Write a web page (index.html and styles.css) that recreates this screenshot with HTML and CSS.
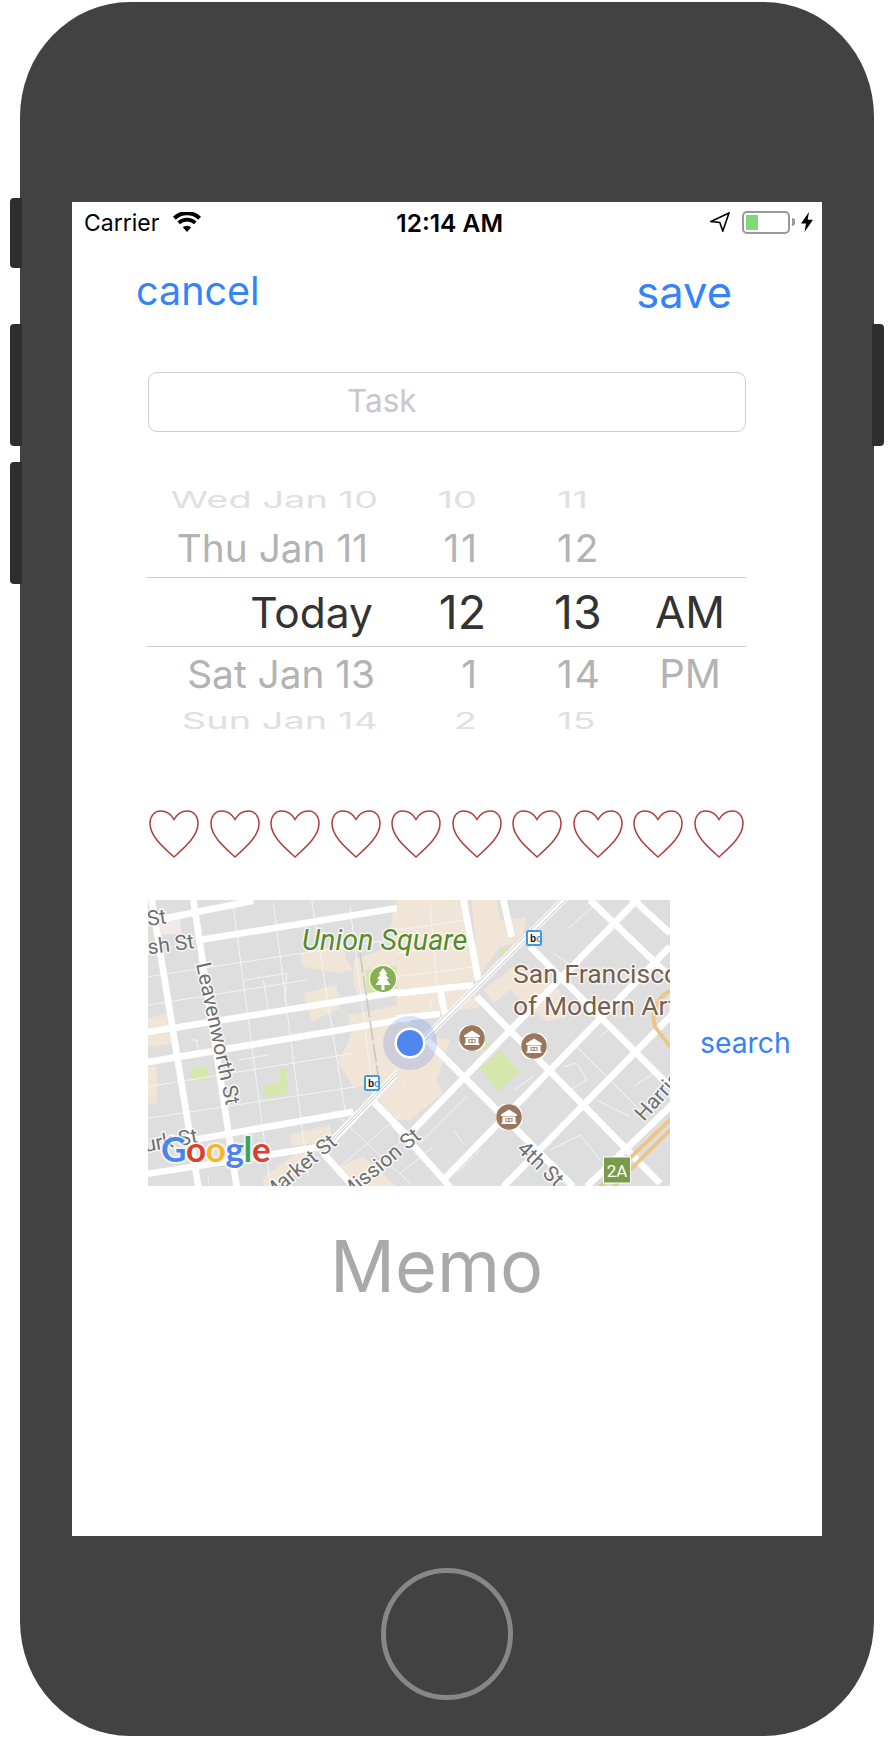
FILE: index.html
```html
<!DOCTYPE html>
<html lang="en">
<head>
<meta charset="utf-8">
<title>Memo</title>
<link rel="stylesheet" href="styles.css">
</head>
<body>
<svg class="defs" width="0" height="0" aria-hidden="true">
  <symbol id="heart" viewBox="0 0 50 48">
    <path d="M25 9.5C22 4 17 1 11.500 1 5 1 1 6.500 1 13.500 1 26 14 37 25 47 36 37 49 26 49 13.500 49 6.500 45 1 38.500 1 33 1 28 4 25 9.500Z"/>
  </symbol>
  <symbol id="museum" viewBox="0 0 26 26">
    <circle cx="13" cy="13" r="13.500" fill="#9a775c" stroke="#fff" stroke-width="1.500"/>
    <path d="M13 5.500 21 10.500V12H5V10.500Z" fill="#fff"/>
    <path d="M6.500 12.500H19.500V18.500H20.500V20H5.500V18.500H6.500Z" fill="#fff"/>
    <path d="M9.500 14H16.500V18H9.500Z" fill="#9a775c"/>
    <path d="M10.500 14.500H11.800V17.500H10.500ZM14.200 14.500H15.500V17.500H14.200ZM11.500 15.500H14.500V16.500H11.500Z" fill="#fff"/>
  </symbol>
</svg>

<div class="device">
  <span class="side-button btn-mute"></span>
  <span class="side-button btn-up"></span>
  <span class="side-button btn-down"></span>
  <span class="side-button btn-power"></span>

  <main class="screen">
    <header class="status">
      <div class="status-left">
        <span class="carrier">Carrier</span>
        <svg class="wifi" viewBox="0 0 28 20"><path d="M14 20 9.800 15.300A6.300 6.300 0 0 1 18.200 15.300Z"/><path d="M6.900 12.200 4.500 9.500A14 14 0 0 1 23.500 9.500L21.100 12.200A10.500 10.500 0 0 0 6.900 12.200Z"/><path d="M2.800 7.700 0 4.700A20.500 20.500 0 0 1 28 4.700L25.200 7.700A16.500 16.500 0 0 0 2.800 7.700Z"/></svg>
      </div>
      <span class="clock">12:14 AM</span>
      <div class="status-right">
        <svg class="arrow" viewBox="0 0 20 20"><path d="M19 1 1 9.500 9.800 10.400 12.800 19Z" fill="none" stroke="#000" stroke-width="1.600" stroke-linejoin="miter"/></svg>
        <span class="battery"><span class="battery-level"></span></span>
        <span class="battery-nub"></span>
        <svg class="bolt" viewBox="0 0 12 20"><path d="M8 0 0 11.500H5L3.500 20 12 7.800H6.700Z"/></svg>
      </div>
    </header>

    <nav class="actions">
      <span class="action">cancel</span>
      <span class="action action-save">save</span>
    </nav>

    <div class="task">Task</div>

    <section class="picker">
      <div class="wheel-row far far-top"><span class="date">Wed Jan 10</span><span class="hour">10</span><span class="minute">11</span><span class="ampm"></span></div>
      <div class="wheel-row near near-top"><span class="date">Thu Jan 11</span><span class="hour">11</span><span class="minute">12</span><span class="ampm"></span></div>
      <div class="wheel-row selected"><span class="date">Today</span><span class="hour">12</span><span class="minute">13</span><span class="ampm">AM</span></div>
      <div class="wheel-row near near-bottom"><span class="date">Sat Jan 13</span><span class="hour">1</span><span class="minute">14</span><span class="ampm">PM</span></div>
      <div class="wheel-row far far-bottom"><span class="date">Sun Jan 14</span><span class="hour">2</span><span class="minute">15</span><span class="ampm"></span></div>
    </section>

    <div class="hearts">
      <svg class="heart"><use href="#heart"/></svg><svg class="heart"><use href="#heart"/></svg><svg class="heart"><use href="#heart"/></svg><svg class="heart"><use href="#heart"/></svg><svg class="heart"><use href="#heart"/></svg><svg class="heart"><use href="#heart"/></svg><svg class="heart"><use href="#heart"/></svg><svg class="heart"><use href="#heart"/></svg><svg class="heart"><use href="#heart"/></svg><svg class="heart"><use href="#heart"/></svg>
    </div>

    <div class="location">
      <svg class="map" viewBox="0 0 522 286">
        <rect width="522" height="286" fill="#dedede"/>

        <g transform="translate(-8 -10) scale(.33333)">
          <g class="tan">
            <polygon points="760,60 810,50 810,130 790,140 750,130"/>
            <polygon points="480,190 610,165 620,210 640,240 600,250 490,230"/>
            <polygon points="640,210 810,150 810,300 660,330 640,280"/>
            <polygon points="490,310 590,285 600,355 515,395"/>
            <polygon points="625,375 810,340 810,385 630,410"/>
            <polygon points="635,420 810,395 810,510 725,590 640,590 590,510 620,470"/>
            <polygon points="700,620 760,570 810,620 810,690 770,690"/>
            <polygon points="24,385 78,372 85,408 24,420"/>
            <polygon points="24,438 95,428 100,460 24,472"/>
            <polygon points="24,530 50,528 50,640 24,640"/>
            <polygon points="450,735 570,705 575,740 520,760 455,768"/>
            <polygon points="370,862 470,790 525,790 430,890 370,890"/>
            <polygon points="600,830 670,800 770,890 620,890"/>
            <polygon points="60,90 120,85 125,130 60,135" class="pink"/>
          </g>
          <g class="park">
            <polygon points="152,535 200,528 205,568 158,574"/>
            <polygon points="370,590 418,578 415,536 438,534 442,600 436,615 375,622"/>
            <polygon points="676,240 780,225 788,300 682,312"/>
          </g>
          <g class="lanes">
            <polyline points="24,260 810,140"/><polyline points="24,345 500,270"/><polyline points="24,590 640,490"/><polyline points="24,685 650,590"/>
            <polyline points="280,50 390,880"/><polyline points="400,40 505,860"/><polyline points="515,30 615,660"/><polyline points="630,50 700,620"/>
            <polyline points="315,270 440,250 435,335"/><polyline points="370,270 385,360"/><polyline points="150,450 170,450 175,480"/><polyline points="295,510 385,495"/>
            <polyline points="600,830 810,650"/><polyline points="640,880 810,730"/><polyline points="575,660 810,880"/>
            <polyline points="205,860 205,880"/>
          </g>
          <g class="road">
            <polyline points="0,100 340,32"/><polyline points="180,150 810,48"/>
            <polyline points="0,430 810,300"/><polyline points="0,520 810,385"/>
            <polyline points="160,750 640,665"/><polyline points="0,855 545,770"/>
            <polyline points="35,30 175,890"/><polyline points="160,30 290,890"/>
            <polyline points="690,625 810,745"/><polyline points="550,790 640,890"/>
          </g>
          <polyline class="rail-bed" points="810,510 540,790"/>
          <polyline class="rail" points="810,514 540,794"/><polyline class="rail" points="806,508 536,788"/>
          <polyline class="rail-thin" points="660,190 715,560"/>
        </g>

        <g transform="translate(252 -10) scale(.33333)">
          <g class="tan">
            <polygon points="-10,30 205,30 235,270 -10,305"/>
            <polygon points="215,30 290,30 300,90 380,80 370,130 340,160 300,170 235,260"/>
            <polygon points="-10,310 120,300 130,370 -10,385"/>
            <polygon points="135,300 220,285 240,350 130,370"/>
            <polygon points="250,300 340,230 480,300 500,380 440,395 330,300 280,340"/>
            <polygon points="-10,390 100,440 150,450 110,570 130,610 30,690 -10,660"/>
          </g>
          <g class="park">
            <polygon points="240,535 300,480 360,545 295,605"/>
            <polygon points="300,175 325,175 320,205 305,205"/>
            <polygon points="240,480 275,450 260,480"/>
          </g>
          <g class="lanes">
            <polyline points="-10,120 200,90"/><polyline points="-10,190 220,155"/><polyline points="-10,260 230,230"/>
            <polyline points="90,40 110,280"/><polyline points="90,330 100,380"/><polyline points="0,600 20,580"/>
            <polyline points="500,120 600,30"/><polyline points="460,190 520,230 640,120"/><polyline points="520,460 720,660"/>
            <polyline points="490,530 530,520 560,570 510,600"/><polyline points="600,440 625,420"/><polyline points="700,590 760,550"/>
            <polyline points="590,630 690,680"/><polyline points="450,780 540,735 600,810"/><polyline points="240,780 170,850"/><polyline points="160,720 190,760"/>
            <polyline points="60,760 200,620"/><polyline points="0,850 100,770"/><polyline points="340,600 400,560"/>
          </g>
          <g class="road">
            <polyline points="570,30 810,260"/><polyline points="390,170 810,590"/>
            <polyline points="230,320 780,880"/><polyline points="70,440 520,890"/>
            <polyline points="-20,700 150,890"/>
            <polyline points="720,20 40,720"/><polyline points="810,170 130,870"/>
            <polyline points="820,370 310,890"/><polyline points="820,640 560,890"/>
            <polyline points="690,20 810,130"/><polyline points="-10,310 220,285"/><polyline points="120,295 135,375"/><polyline points="190,30 235,270"/><polyline points="310,30 335,140"/>
            <polyline points="-10,385 120,372"/>
          </g>
          <polyline class="rail-bed" points="500,20 70,450"/>
          <polyline class="rail" points="504,24 74,454"/><polyline class="rail" points="496,16 66,446"/>
          <g class="freeway">
            <polyline points="820,680 600,890"/><polyline points="820,710 640,890"/>
            <path d="M820 300C780 310 750 360 765 410L810 470"/>
          </g>
        </g>

        <g class="label label-grey">
          <text class="lbl-md" transform="translate(0 26) rotate(-8)">St</text>
          <text class="lbl-md" transform="translate(-24 58) rotate(-8)">Bush St</text>
          <text class="lbl-md" transform="translate(48 64) rotate(78)">Leavenworth St</text>
          <text class="lbl-md" transform="translate(-14 254) rotate(-10)">Turk St</text>
          <text class="lbl-md" text-anchor="end" transform="translate(190 244) rotate(-40)">Market St</text>
          <text class="lbl-md" text-anchor="end" transform="translate(274 238) rotate(-40)">Mission St</text>
          <text class="lbl-md" transform="translate(368 250) rotate(44)">4th St</text>
          <text class="lbl-md" transform="translate(496 222) rotate(-48)">Harrison</text>
        </g>
        <text class="label label-green" x="154" y="50">Union Square</text>
        <g class="label label-brown">
          <text x="365" y="83">San Francisco</text>
          <text x="365" y="115">of Modern Art</text>
        </g>

        <circle cx="235" cy="79" r="14" fill="#fff"/>
        <circle cx="235" cy="79" r="13" fill="#8aad56"/>
        <path d="M235 68 239.500 74H237.500L241 79H238.500L242.500 85H236.500V90H233.500V85H227.500L231.500 79H229L232.500 74H230.500Z" fill="#fff"/>

        <use href="#museum" x="311" y="125" width="26" height="26"/>
        <use href="#museum" x="373" y="133" width="26" height="26"/>
        <use href="#museum" x="348" y="204" width="26" height="26"/>

        <circle cx="262" cy="143" r="27" fill="#4d86ee" fill-opacity=".22"/>
        <circle cx="262" cy="143" r="15.500" fill="#fff"/>
        <circle cx="262" cy="143" r="13" fill="#4f87ee"/>

        <g class="bart">
          <rect x="217" y="176" width="14" height="14" rx="1.500"/>
          <rect x="379" y="31" width="14" height="14" rx="1.500"/>
          <text x="220" y="187">b<tspan class="bart-o">o</tspan></text>
          <text x="382" y="42">b<tspan class="bart-o">o</tspan></text>
        </g>

        <rect class="shield" x="455.500" y="257" width="27" height="26"/>
        <text class="shield-text" x="469" y="277">2A</text>

        <text class="google" x="13" y="262"><tspan fill="#4a85ed">G</tspan><tspan fill="#d8402f">o</tspan><tspan fill="#f2b92b">o</tspan><tspan fill="#4a85ed">g</tspan><tspan fill="#3aa757">l</tspan><tspan fill="#d8402f">e</tspan></text>
      </svg>
      <span class="search">search</span>
    </div>

    <div class="memo">Memo</div>
  </main>

  <footer class="home-area"><span class="home"></span></footer>
</div>
</body>
</html>
```
FILE: styles.css
```css
* { box-sizing: border-box; }

html, body { margin: 0; background: #fff; }

body {
  width: 894px;
  height: 1738px;
  overflow: hidden;
  padding: 2px 0 0 20px;
  font-family: Inter, "Liberation Sans", sans-serif;
}

.defs { position: absolute; }

.device {
  position: relative;
  width: 854px;
  height: 1734px;
  padding: 200px 0 0 52px;
  background: #424242;
  border-radius: 110px / 115px;
}

.side-button {
  position: absolute;
  width: 12px;
  background: #2e2e2e;
  border-radius: 4px;
}
.btn-mute { left: -10px; top: 196px; height: 70px; border-radius: 4px 0 0 4px; }
.btn-up { left: -10px; top: 322px; height: 122px; border-radius: 4px 0 0 4px; }
.btn-down { left: -10px; top: 460px; height: 122px; border-radius: 4px 0 0 4px; }
.btn-power { right: -10px; top: 322px; height: 122px; border-radius: 0 4px 4px 0; }

.screen {
  width: 750px;
  height: 1334px;
  background: #fff;
  overflow: hidden;
}

/* status bar */
.status {
  position: relative;
  display: flex;
  align-items: center;
  justify-content: space-between;
  height: 40px;
  padding: 0 9px 0 12px;
  color: #000;
}
.status-left { display: flex; align-items: center; gap: 14px; }
.carrier { font-size: 23px; line-height: 38px; padding-top: 2px; }
.wifi { width: 28px; height: 20px; fill: #000; }
.clock { font-size: 24.500px; font-weight: 600; line-height: 38px; margin-left: -12px; padding-top: 2px; }
.status-right { display: flex; align-items: center; }
.arrow { width: 20px; height: 20px; margin-right: 12px; }
.battery {
  width: 48px;
  height: 23px;
  padding: 2px;
  border: 2px solid #9a9a9a;
  border-radius: 5px;
}
.battery-level { display: block; width: 12px; height: 100%; background: #7fd976; }
.battery-nub {
  width: 3px;
  height: 8px;
  margin: 0 6px 0 2px;
  background: #9a9a9a;
  border-radius: 0 3px 3px 0;
}
.bolt { width: 12px; height: 20px; fill: #000; }

/* nav */
.actions {
  display: flex;
  justify-content: space-between;
  align-items: flex-start;
  height: 48px;
  margin-top: 25px;
  padding: 0 90px 0 64px;
}
.action { font-size: 39.500px; line-height: 48px; color: #3583f6; }
.action-save { margin-top: 1px; font-size: 43.500px; }

/* task field */
.task {
  width: 598px;
  height: 60px;
  margin: 57px 0 0 76px;
  padding-left: 198px;
  border: 1px solid #cdcdcd;
  border-radius: 9px;
  font-size: 31.500px;
  line-height: 56px;
  color: #c7c7cd;
}

/* date picker */
.picker {
  width: 600px;
  height: 251px;
  margin: 59px 0 0 74px;
  overflow: hidden;
  color: #b3b3b3;
}
.wheel-row {
  display: grid;
  grid-template-columns: 232px 108px 148px 112px;
  align-items: center;
  white-space: nowrap;
}
.wheel-row span { display: block; }
.date, .hour { text-align: right; }
.minute { padding-left: 67px; }
.ampm { text-align: center; }

.far { font-size: 38px; color: #e0e0e0; }
.far-top { height: 18px; line-height: 18px; }
.far-bottom { height: 42px; line-height: 42px; }
.far-top span, .far-bottom span { transform: scaleY(.6); }
.far .hour { padding-right: 9px; }
.far .minute { padding-left: 71px; }

.near { height: 57px; font-size: 38.800px; line-height: 46px; }
.near .hour, .near .minute { letter-spacing: 2px; }
.near .hour { padding-right: 7px; }
.near .minute { padding-left: 71px; }
.near .ampm { font-size: 40px; }
.near-top { height: 68px; padding-bottom: 6px; align-items: end; }
.near-top .date { padding-right: 10px; }
.near-bottom { height: 53px; }
.near-bottom .date { padding-right: 3px; }

.selected {
  height: 70px;
  font-size: 44px;
  color: #333;
  border-top: 1px solid #cccccc;
  border-bottom: 1px solid #cccccc;
}
.selected .date { font-size: 42.500px; padding-right: 5px; }
.selected .hour, .selected .minute { font-size: 46.500px; }
.selected .minute { padding-left: 68px; }

/* hearts */
.hearts {
  display: flex;
  justify-content: space-between;
  width: 595px;
  margin: 68px 0 0 77px;
}
.heart {
  width: 50px;
  height: 48px;
  fill: none;
  stroke: #ab3f3f;
  stroke-width: 1.500;
}

/* map */
.location {
  display: flex;
  align-items: center;
  gap: 30px;
  margin: 42px 0 0 76px;
}
.map { width: 522px; height: 286px; flex: none; display: block; }
.search { font-size: 28.300px; color: #3583f6; line-height: 34px; }

.tan polygon { fill: #f0e5d6; }
.tan .pink { fill: #f3e8ea; }
.park polygon { fill: #d5e7ac; }
.road polyline { fill: none; stroke: #fff; stroke-width: 20; }
.lanes polyline { fill: none; stroke: #f4f4f4; stroke-width: 3; }
.rail-bed { fill: none; stroke: #fff; stroke-width: 20; }
.rail { fill: none; stroke: #c3c3c3; stroke-width: 3; }
.rail-thin { fill: none; stroke: #c9c9c9; stroke-width: 5; stroke-dasharray: 60 8; }
.freeway polyline, .freeway path { fill: none; stroke: #ecc686; stroke-width: 12; }

.label {
  paint-order: stroke;
  stroke: #fff;
  stroke-opacity: .75;
  stroke-width: 3px;
  stroke-linejoin: round;
}
.label-grey { font-size: 21px; fill: #6f6f6f; }
.lbl-md { font-family: Roboto, sans-serif; }
.label-green { font-family: Roboto, sans-serif; font-style: italic; font-size: 28.700px; fill: #5a8a2b; }
.label-brown { font-family: Roboto, sans-serif; font-size: 26.500px; fill: #76604b; }

.bart rect { fill: #fff; stroke: #3f9bdc; stroke-width: 2; }
.bart text { font-family: "Liberation Sans", sans-serif; font-size: 10px; font-weight: 700; fill: #111; }
.bart-o { fill: #3f9bdc; }

.shield { fill: #7a9b4c; stroke: #fff; stroke-width: 1; }
.shield-text { font-family: Roboto, sans-serif; font-size: 17px; fill: #fff; text-anchor: middle; }

.google {
  font-family: Lato, sans-serif;
  font-size: 35px;
  font-weight: 700;
  letter-spacing: -.3px;
  paint-order: stroke;
  stroke: #fff;
  stroke-opacity: .6;
  stroke-width: 4px;
  stroke-linejoin: round;
}

/* memo */
.memo {
  margin-top: 35px;
  padding-left: 258px;
  font-size: 72px;
  line-height: 90px;
  color: #a9a9a9;
}

/* home */
.home-area { display: flex; justify-content: center; padding-top: 32px; margin-left: -52px; }
.home {
  display: block;
  width: 132px;
  height: 132px;
  border: 5.500px solid #878787;
  border-radius: 50%;
}
```
